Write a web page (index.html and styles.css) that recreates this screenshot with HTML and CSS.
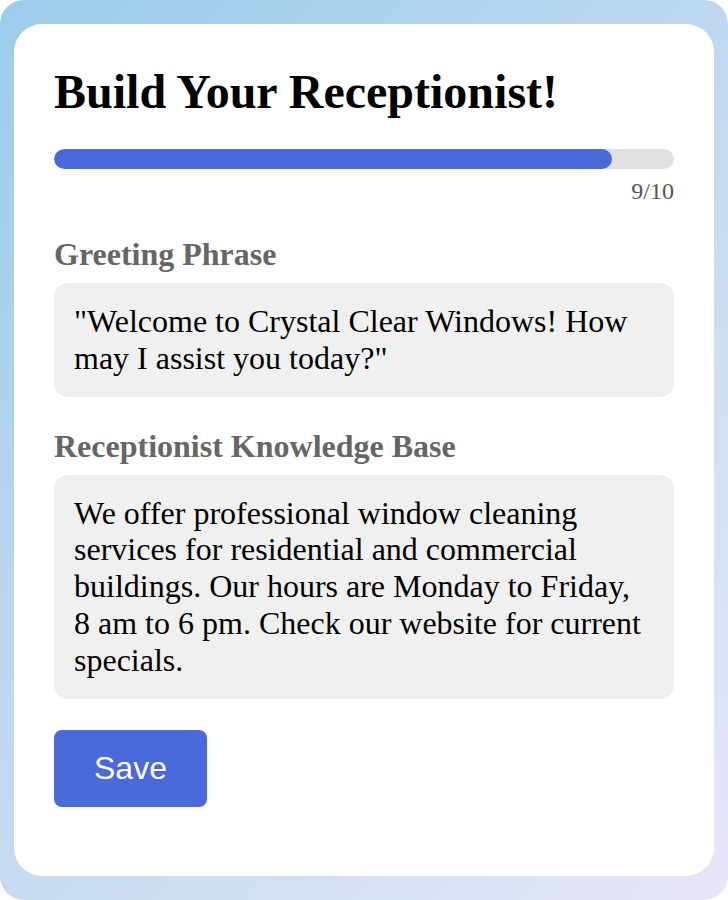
FILE: index.html
```html
<!DOCTYPE html>
<html lang="en">

<head>
  <meta charset="UTF-8">
  <meta name="viewport" content="width=device-width, initial-scale=1.0">
  <title>Build Your Receptionist</title>
  <link rel="stylesheet" href="styles.css">
</head>

<body>
  <div class="page">
    <div class="card">
      <h1 class="title">Build Your Receptionist!</h1>

      <div class="progress">
        <div class="progress-fill" style="width: 90%"></div>
      </div>
      <div class="progress-count">9/10</div>

      <div class="field">
        <div class="field-label">Greeting Phrase</div>
        <div class="field-box">"Welcome to Crystal Clear Windows! How may I assist you today?"</div>
      </div>

      <div class="field">
        <div class="field-label">Receptionist Knowledge Base</div>
        <div class="field-box">We offer professional window cleaning services for residential and commercial buildings. Our hours are Monday to Friday, 8 am to 6 pm. Check our website for current specials.</div>
      </div>

      <button class="save-btn">Save</button>
    </div>
  </div>
</body>

</html>
```

FILE: styles.css
```css
html {
  background-color: #ffffff;
}

body {
  margin: 0px;
  font-family: "Liberation Serif", "Times New Roman", serif;
}

.page {
  height: 900px;
  box-sizing: border-box;
  padding: 24px 14px;
  border-radius: 24px;
  background: linear-gradient(135deg, #9bcdea 0%, #c2daf0 50%, #e8e6f8 100%);
  display: flex;
  flex-direction: column;
}

.card {
  flex: 1;
  background-color: #ffffff;
  border-radius: 28px;
  padding: 40px;
}

.title {
  margin: 0px 0px 30px 0px;
  font-size: 48px;
  font-weight: bold;
  color: #000000;
}

.progress {
  height: 20px;
  border-radius: 10px;
  background-color: #e0e0e0;
  overflow: hidden;
}

.progress-fill {
  height: 100%;
  border-radius: 10px;
  background-color: #4a69db;
}

.progress-count {
  margin-top: 9px;
  text-align: right;
  font-size: 24px;
  color: #555555;
}

.field {
  margin-top: 31px;
}

.field-label {
  font-size: 32px;
  font-weight: bold;
  color: #666666;
  margin-bottom: 10px;
}

.field-box {
  background-color: #f0f0f0;
  border-radius: 14px;
  padding: 20px;
  font-size: 32px;
  line-height: 1.15;
  color: #000000;
}

.save-btn {
  margin-top: 31px;
  border: none;
  border-radius: 8px;
  background-color: #4a69db;
  color: #ffffff;
  font-family: "Liberation Sans", Arial, sans-serif;
  font-size: 32px;
  padding: 20px 40px;
  cursor: pointer;
}
```
